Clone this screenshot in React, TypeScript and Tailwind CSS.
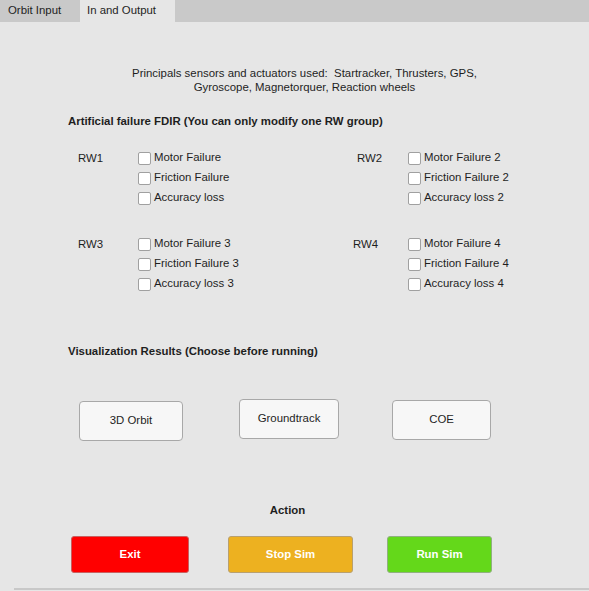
import React from "react";

interface Group {
  label: string;
  labelPad: string;
  items: string[];
}

const rows: [Group, Group][] = [
  [
    { label: "RW1", labelPad: "pl-0", items: ["Motor Failure", "Friction Failure", "Accuracy loss"] },
    { label: "RW2", labelPad: "pl-[4px]", items: ["Motor Failure 2", "Friction Failure 2", "Accuracy loss 2"] },
  ],
  [
    { label: "RW3", labelPad: "pl-0", items: ["Motor Failure 3", "Friction Failure 3", "Accuracy loss 3"] },
    { label: "RW4", labelPad: "pl-0", items: ["Motor Failure 4", "Friction Failure 4", "Accuracy loss 4"] },
  ],
];

function CheckGroup({ group, labelWidth }: { group: Group; labelWidth: string }) {
  return (
    <div className="flex">
      <div className={`${labelWidth} ${group.labelPad} h-[20px] leading-[20px]`}>{group.label}</div>
      <div className="flex flex-col">
        {group.items.map((item) => (
          <label key={item} className="flex items-center h-[20px] gap-[3px] cursor-default">
            <input type="checkbox" className="appearance-none w-[13px] h-[13px] mt-[1px] bg-white border border-[#a0a0a0] rounded-[2px]" />
            <span>{item}</span>
          </label>
        ))}
      </div>
    </div>
  );
}

export default function App() {
  return (
    <div
      className="w-[589px] h-[591px] overflow-hidden bg-[#e6e6e6] text-[11.4px] text-[#1e1e1e] flex flex-col"
      style={{ fontFamily: '"Liberation Sans", Arial, sans-serif' }}
    >
      <div className="h-[22px] bg-[#c9c9c9] flex items-stretch shrink-0">
        <div className="w-[79px] pl-[8px] flex items-center">Orbit Input</div>
        <div className="w-[95px] ml-[1px] bg-[#e6e6e6] pl-[7px] flex items-center">In and Output</div>
      </div>

      <div className="flex flex-col flex-1">
        <div className="mt-[44px] text-center leading-[14px] pl-[20px]">
          <div>Principals sensors and actuators used:&nbsp; Startracker, Thrusters, GPS,</div>
          <div>Gyroscope, Magnetorquer, Reaction wheels</div>
        </div>

        <div className="mt-[20px] ml-[68px] font-bold leading-[14px]">
          Artificial failure FDIR (You can only modify one RW group)
        </div>

        <div className="mt-[20px] flex flex-col gap-[26px]">
          {rows.map(([l, r]) => (
            <div key={l.label} className="flex pl-[78px]">
              <div className="w-[275px]">
                <CheckGroup group={l} labelWidth="w-[60px]" />
              </div>
              <CheckGroup group={r} labelWidth="w-[55px]" />
            </div>
          ))}
        </div>

        <div className="mt-[50px] ml-[68px] font-bold leading-[14px]">
          Visualization Results (Choose before running)
        </div>

        <div className="mt-[41px] flex items-center h-[42px]">
          <button className="ml-[79px] w-[104px] h-[40px] mt-[2px] bg-[#f7f7f7] border border-[#a8a8a8] rounded-[4px]">3D Orbit</button>
          <button className="ml-[56px] w-[100px] h-[40px] -mt-[2px] bg-[#f7f7f7] border border-[#a8a8a8] rounded-[4px]">Groundtrack</button>
          <button className="ml-[53px] w-[99px] h-[40px] bg-[#f7f7f7] border border-[#a8a8a8] rounded-[4px]">COE</button>
        </div>

        <div className="mt-[62px] text-center font-bold leading-[14px] -ml-[14px]">Action</div>

        <div className="mt-[19px] flex">
          <button className="ml-[71px] w-[118px] h-[37px] bg-[#ff0000] border border-[#c86060] rounded-[3px] text-white font-bold">Exit</button>
          <button className="ml-[39px] w-[125px] h-[37px] bg-[#edb120] border border-[#b8a070] rounded-[3px] text-white font-bold">Stop Sim</button>
          <button className="ml-[34px] w-[105px] h-[37px] bg-[#64d81a] border border-[#90b080] rounded-[3px] text-white font-bold">Run Sim</button>
        </div>

        <div className="mt-auto ml-[14px] h-[2px] bg-[#c8c8c8] mb-[1px]" />
      </div>
    </div>
  );
}
